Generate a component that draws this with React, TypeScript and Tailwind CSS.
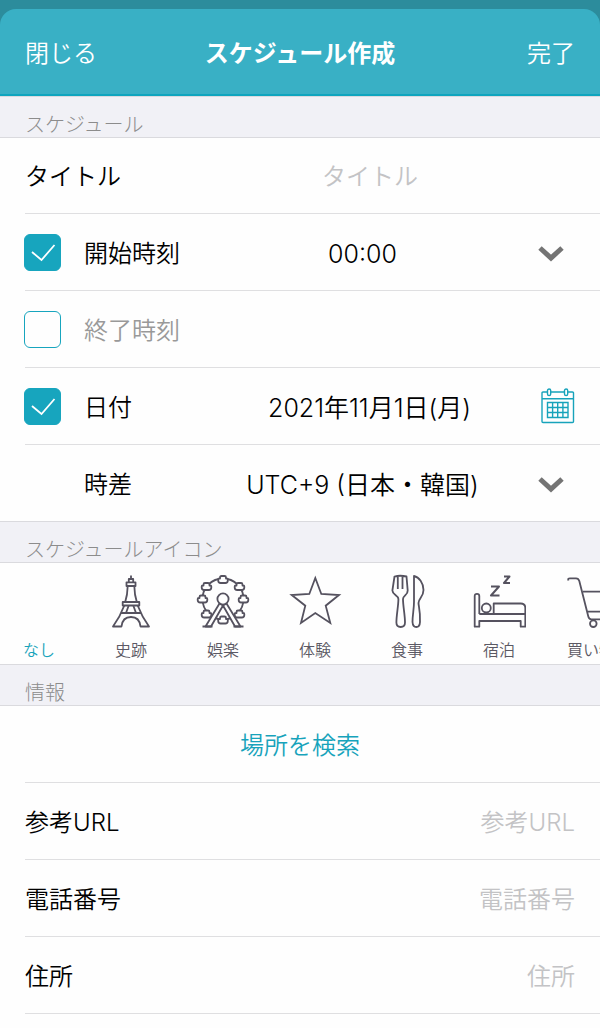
import React, { useState } from 'react';

const Chevron: React.FC<{}> = () => (
  <svg className="pointer-events-none mr-[10px] h-5 w-7" viewBox="0 0 28 20" fill="none" aria-hidden="true">
    <path d="M3 6 14 16 25 6" stroke="#747474" strokeWidth="5" />
  </svg>
);

const CalendarIcon: React.FC<{}> = () => (
  <svg className="h-9 w-9" viewBox="0 0 36 36" fill="none" stroke="#17a3bb" strokeWidth="1.4" aria-hidden="true">
    <path d="M8.500 4H4q-1 0-1 1v28.500q0 1 1 1h29.500q1 0 1-1V5q0-1-1-1h-4.500M11.700 4h13.600M3 10.700h31.500" />
    <rect x="8.500" y="1" width="3.200" height="6.500" rx="1.600" />
    <rect x="25.500" y="1" width="3.200" height="6.500" rx="1.600" />
    <path d="M8.500 14.500h20.500v15H8.500zM13.600 14.500v15M18.700 14.500v15M23.900 14.500v15M8.500 19.500h20.500M8.500 24.500h20.500" />
  </svg>
);

const gondola =
  'm-3-1v-1q0-1.500 1.500-1.500h3q1.500 0 1.500 1.500v1h.8q1 0 1 1v1q0 2.500-2.500 2.500h-4.600q-2.500 0-2.500-2.500v-1q0-1 1-1z';

const icons = [
  { name: 'なし', drawing: null },
  {
    name: '史跡',
    drawing: (
      <>
        <path d="M27 1.500V5M24.800 8.300V5h4.400v3.300M22.500 8.300h9V12h-9zM23.700 12q-.2 9-2.500 16M30.300 12q.2 9 2.500 16M18.700 28h16.600v3.500H18.700z" />
        <path d="M20.300 31.500Q16 43 9 52.500h8.500q1-9.500 9.500-9.500t9.500 9.500H45Q38 43 33.700 31.500M16.500 39h21M24.700 31.500 22 39M29.300 31.500 32 39" />
      </>
    ),
  },
  {
    name: '娯楽',
    drawing: (
      <>
        <circle cx="27" cy="25" r="20.500" />
        <g fill="#fefefe">
          <path d={`M27 5.500${gondola}`} />
          <path d={`M10.500 12.500${gondola}`} />
          <path d={`M43.500 12.500${gondola}`} />
          <path d={`M6.500 25${gondola}`} />
          <path d={`M47.500 25${gondola}`} />
          <path d={`M10.500 40${gondola}`} />
          <path d={`M43.500 40${gondola}`} />
          <path d={`M27 46${gondola}`} />
          <path d="M23.500 29.500 9.500 52.500H15L27 31.500zM30.500 29.500l14 23H39L27 31.500z" />
          <path d="M6.500 52.500h10M37.500 52.500h10" />
          <circle cx="27" cy="25" r="5.600" />
        </g>
      </>
    ),
  },
  {
    name: '体験',
    drawing: (
      <path d="M27.300 4 33.300 20 51 21 37.700 31.700 42.300 49 27.300 39 13 49 17.300 31.700 3.700 21 21.300 20z" strokeLinejoin="miter" />
    ),
  },
  {
    name: '食事',
    drawing: (
      <>
        <path d="M14.500 2.500Q20 1 26.500 2.500l1.200 14c.3 4.500-4.700 5-4.700 8.500 0 7 2 16 2 23.500q0 4.500-4.300 4.500t-4.300-4.500c0-7.500 2-16.500 2-23.500 0-3.500-6-4-6-8.500zM17.800 3v12M22.500 3v12" />
        <path d="M34 2c5 1 9.500 7 9.500 14s-5 8.500-5 13c0 3 2 8 1.500 19q-.2 5-3.700 5t-3.800-5c0-7 1.500-13 1.500-20z" />
      </>
    ),
  },
  {
    name: '宿泊',
    drawing: (
      <>
        <path d="M7.300 40V22q0-2.200-2.300-2.200T2.700 22v30.700h4.600V47h41.400v5.700h4.600V34q0-4.500-4.500-4.500H21.700V40M7.300 40h46" />
        <circle cx="14.300" cy="34" r="4.500" />
        <path d="M19 12.500h8L19 21.500h8.500M32 2.500h5.500L32 9h6" strokeWidth="2" />
      </>
    ),
  },
  {
    name: '買い物',
    drawing: (
      <>
        <path d="M4.500 6.500q-1-2.200 1.500-2.200h6q2.500 0 3.300 2.700l9 35.500q.7 2.800 3 2.800H48M19 17.700h33l-4 20H23.500" />
        <circle cx="29.300" cy="49.700" r="3.300" />
        <circle cx="44" cy="49.700" r="3.300" />
      </>
    ),
  },
];

const SectionTitle: React.FC<{ children: React.ReactNode }> = ({ children }) => (
  <h2 className="flex h-[42px] items-end border-y border-[#dadade] bg-[#f1f1f6] px-[25px] text-xl leading-6 font-light text-[#8c8c8c]">
    {children}
  </h2>
);

interface CheckProps {
  id: string;
  checked: boolean;
  onChange: (checked: boolean) => void;
}

const Check: React.FC<CheckProps> = ({ id, checked, onChange }) => (
  <span className="mr-[23px] -ml-px grid shrink-0">
    <input
      id={id}
      type="checkbox"
      checked={checked}
      onChange={(e) => onChange(e.target.checked)}
      className="col-start-1 row-start-1 size-[37px] appearance-none rounded-md border border-[#17a5be] checked:bg-[#17a5be]"
    />
    {checked && (
      <svg className="pointer-events-none col-start-1 row-start-1 size-[37px]" viewBox="0 0 37 37" fill="none" aria-hidden="true">
        <path d="m8 18 9.500 8L30.500 11" stroke="#fff" strokeWidth="1.800" />
      </svg>
    )}
  </span>
);

const row = 'flex h-[77px] items-center border-b border-[#dfdfe1] pr-[25px]';
const lastRow = 'flex h-[76px] items-center pr-[25px]';
const select =
  'min-w-0 flex-1 appearance-none bg-transparent pt-1 text-center text-[25px] [text-align-last:center]';

const InfoRow: React.FC<{ id: string; label: string; type: string }> = ({ id, label, type }) => (
  <div className={row}>
    <label htmlFor={id} className="pt-1">{label}</label>
    <input
      id={id}
      type={type}
      placeholder={label}
      className="min-w-0 flex-1 pt-1 text-right outline-none placeholder:text-[#c3c3c5]"
    />
  </div>
);

const App: React.FC<{}> = () => {
  const [hasStart, setHasStart] = useState(true);
  const [hasEnd, setHasEnd] = useState(false);
  const [hasDate, setHasDate] = useState(true);
  const [icon, setIcon] = useState('なし');

  return (
    <div className="min-h-screen overflow-hidden bg-[#fefefe] font-['Inter','Noto_Sans_CJK_JP',sans-serif] text-2xl leading-8 font-[350] text-black">
      <div className="bg-[#2c8c9c] pt-[9px]">
        <header className="grid h-[87px] grid-cols-[1fr_auto_1fr] items-center rounded-t-2xl border-b-2 border-[#0fa5be] bg-[#39b0c5] px-[25px] pt-1 text-white">
          <button type="button" className="justify-self-start">閉じる</button>
          <h1 className="font-bold">スケジュール作成</h1>
          <button type="button" className="justify-self-end">完了</button>
        </header>
      </div>

      <SectionTitle>スケジュール</SectionTitle>
      <div className="-mt-px pl-[25px]">
        <div className={row}>
          <label htmlFor="title" className="w-35 pt-1">タイトル</label>
          <input
            id="title"
            type="text"
            placeholder="タイトル"
            className="min-w-0 flex-1 pt-1 text-center outline-none placeholder:text-[#c3c3c5]"
          />
        </div>
        <div className={row}>
          <Check id="start" checked={hasStart} onChange={setHasStart} />
          <label htmlFor="start" className="w-26 pt-1">開始時刻</label>
          <select aria-label="開始時刻" className={select}>
            <option>00:00</option>
          </select>
          <Chevron />
        </div>
        <div className={row}>
          <Check id="end" checked={hasEnd} onChange={setHasEnd} />
          <label htmlFor="end" className="pt-1 text-[#999]">終了時刻</label>
        </div>
        <div className={row}>
          <Check id="date" checked={hasDate} onChange={setHasDate} />
          <label htmlFor="date" className="w-29 pt-1">日付</label>
          <button type="button" className="flex-1 pt-1 text-[25px]">2021年11月1日(月)</button>
          <button type="button" aria-label="カレンダー">
            <CalendarIcon />
          </button>
        </div>
        <div className={lastRow}>
          <label htmlFor="zone" className="ml-[59px] w-26 pt-1">時差</label>
          <select id="zone" className={select}>
            <option>UTC+9 (日本・韓国)</option>
          </select>
          <Chevron />
        </div>
      </div>

      <SectionTitle>スケジュールアイコン</SectionTitle>
      <ul className="flex gap-7 overflow-hidden pt-[11px] pb-1 pl-[7px]">
        {icons.map(({ name, drawing }) => (
          <li key={name} className="w-16 shrink-0">
            <button
              type="button"
              aria-pressed={icon === name}
              onClick={() => setIcon(name)}
              className="flex w-full flex-col items-center gap-3 text-base leading-5 text-[#5b5964] aria-pressed:text-[#17a3bb]"
            >
              <svg
                className="size-[54px]"
                viewBox="0 0 54 54"
                fill="none"
                stroke="#55525f"
                strokeWidth="1.800"
                strokeLinejoin="round"
                aria-hidden="true"
              >
                {drawing}
              </svg>
              <span>{name}</span>
            </button>
          </li>
        ))}
      </ul>

      <SectionTitle>情報</SectionTitle>
      <div className="pl-[25px]">
        <div className={row}>
          <button type="button" className="flex-1 pt-1 text-[#17a3bb]">場所を検索</button>
        </div>
        <InfoRow id="url" label="参考URL" type="url" />
        <InfoRow id="phone" label="電話番号" type="tel" />
        <InfoRow id="address" label="住所" type="text" />
      </div>
    </div>
  );
};

export default App;
